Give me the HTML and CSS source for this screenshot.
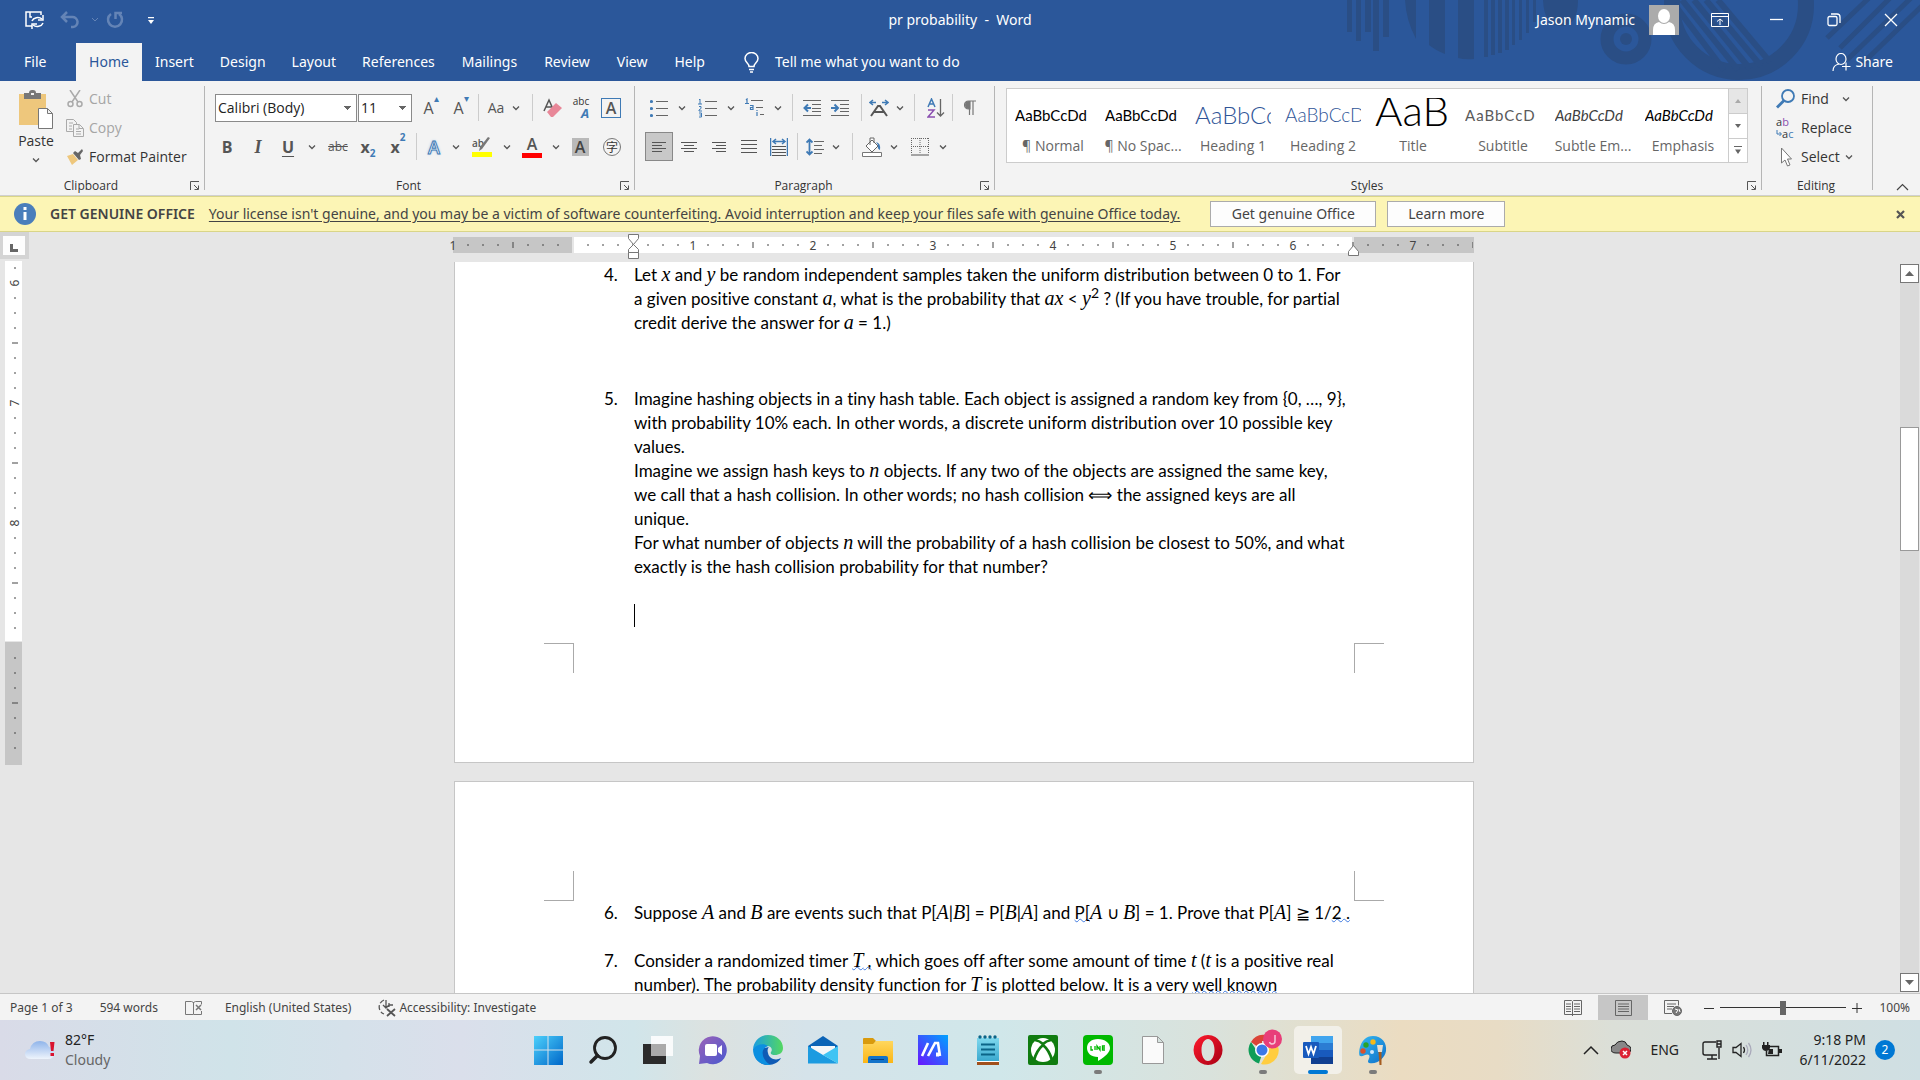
FILE: index.html
```html
<!DOCTYPE html>
<html lang="en">
<head>
<meta charset="utf-8">
<title>pr probability - Word</title>
<link rel="stylesheet" href="styles.css">
</head>
<body>
<svg class="defs" aria-hidden="true">
  <defs>
    <symbol id="chev" viewBox="0 0 8 6"><path d="M1 1.500l3 3 3-3" fill="none" stroke="#555" stroke-width="1.300"/></symbol>
    <symbol id="launch" viewBox="0 0 10 10"><path d="M.5 9V.5H9M4 4l4 4M8.500 4.500v4h-4" fill="none" stroke="#555"/></symbol>
    <pattern id="ticks" width="120" height="16" patternUnits="userSpaceOnUse">
      <path d="M15 7v2M30 7v2M45 7v2M60 5v6M75 7v2M90 7v2M105 7v2" stroke="#444" fill="none"/>
    </pattern>
    <pattern id="vticks" y="22" width="17" height="120" patternUnits="userSpaceOnUse">
      <path d="M9 15h2M9 30h2M9 45h2M7 60h6M9 75h2M9 90h2M9 105h2" stroke="#444" fill="none"/>
    </pattern>
    <linearGradient id="gWin" x2="1" y2="1"><stop stop-color="#4cd0fb"/><stop offset="1" stop-color="#0067c9"/></linearGradient>
    <linearGradient id="gCloud" y2="1" x2="0"><stop stop-color="#8fb4ea"/><stop offset="1" stop-color="#eef4fc"/></linearGradient>
    <linearGradient id="gChat" y2="1" x2="1"><stop stop-color="#9b62b8"/><stop offset="1" stop-color="#4a58cf"/></linearGradient>
    <linearGradient id="gEdge" x2="1" y2="0"><stop stop-color="#1b9de2"/><stop offset="1" stop-color="#54d860"/></linearGradient>
    <linearGradient id="gAsus" x2="1" y1="1" y2="0"><stop stop-color="#6a14ff"/><stop offset="1" stop-color="#00a2ff"/></linearGradient>
    <linearGradient id="gOpera" x2="1" y2="1"><stop stop-color="#ff1b2d"/><stop offset="1" stop-color="#a70014"/></linearGradient>
    <linearGradient id="gFold" x2="0" y2="1"><stop stop-color="#ffd75e"/><stop offset="1" stop-color="#fbb616"/></linearGradient>
    <linearGradient id="gNote" x2="0" y2="1"><stop stop-color="#7fd8ee"/><stop offset="1" stop-color="#3aa9cf"/></linearGradient>
    <linearGradient id="gPaint" x2="1" y2="1"><stop stop-color="#34b8f1"/><stop offset="1" stop-color="#0f6fc9"/></linearGradient>
  </defs>
</svg>

<header class="top">
  <svg class="art" viewBox="0 0 580 81" aria-hidden="true">
    <g fill="#2a4e85">
      <path d="M7 0h5v32H7zM16 0h5v41h-5zM25 0h6v32h-6zM33 0h6v51h-6zM43 0h6v37h-6zM65 0h11v39Q66 20 65 0zM89 0h16v54q-10-4-16-9zM118 0h16v59q-9 1-16-1zM144 0h4v57h-4zM151 0h4v55h-4zM158 0h4v53h-4zM165 0h4v50h-4zM172 0h3v45h-3zM179 0h3v40h-3zM186 0h3v33h-3zM193 0h3v22h-3zM203 0h35q0 26-17 26T203 0z"/>
    </g>
    <g fill="none" stroke="#2a4e85">
      <circle cx="286" cy="39" r="19" stroke-width="13"/>
      <circle cx="399" cy="5" r="67" stroke-width="16"/>
      <path d="M334 4l50 66M342 0l56 70M354 0l56 69M366 0l55 66M378 0l52 62" stroke-width="6"/>
      <path d="M487 38l44-42M500 48l52-52M507 60l66-64M522 64l64-62" stroke-width="5"/>
    </g>
    <circle cx="286" cy="39" r="6" fill="#2a4e85"/>
  </svg>
  <div class="titlebar">
    <div class="qat">
      <button aria-label="Save"><svg width="20" height="20" viewBox="0 0 20 20" fill="none" stroke="#fff" stroke-width="1.500"><path d="M7 16H1V2h15v3M5 2v5h2M7 11a6 5 0 0 1 10-2M18 13a6 5 0 0 1-10 2"/><path d="M18 5v5h-5M7 19v-5h5"/></svg></button>
      <button aria-label="Undo"><svg width="20" height="18" viewBox="0 0 20 18" fill="none" stroke="#6484b6" stroke-width="2.500"><path d="M7 1L2 6l5 5M3 6h9a4.500 4.500 0 0 1 1 10h-2"/></svg></button>
      <button aria-label="Undo list"><svg width="8" height="6" viewBox="0 0 8 6"><path d="M1 1l3 3 3-3" fill="none" stroke="#6484b6"/></svg></button>
      <button class="redo" aria-label="Redo"><svg width="18" height="18" viewBox="0 0 18 18" fill="none" stroke="#6484b6" stroke-width="2.500"><path d="M5 3a7 7 0 1 0 8 0M9.500 8V2H16"/></svg></button>
      <button aria-label="Customize toolbar"><svg width="8" height="8" viewBox="0 0 8 8"><path d="M1 1h6v1.300H1zM1 4h6L4 8z" fill="#fff"/></svg></button>
    </div>
    <h1 class="title">pr probability &nbsp;-&nbsp; Word</h1>
    <div class="winctl">
      <span class="user">Jason Mynamic</span>
      <svg class="avatar" width="30" height="30" viewBox="0 0 30 30"><path fill="#ababab" d="M0 0h30v30H0z"/><g fill="#fff"><ellipse cx="15" cy="11" rx="6" ry="7"/><path d="M4 30V25q0-7 6-8 5 4 10 0 6 1 6 8v5z"/></g></svg>
      <button aria-label="Ribbon options"><svg width="18" height="14" viewBox="0 0 18 14" fill="none" stroke="#fff"><path d="M.5.5h17v13H.5zM.5 3.500h17M9 12V6M6 8.500L9 6l3 2.500"/></svg></button>
      <button aria-label="Minimize"><svg width="14" height="14" viewBox="0 0 14 14"><path d="M0 6.500h13" stroke="#fff" stroke-width="1.300"/></svg></button>
      <button aria-label="Restore"><svg width="14" height="14" viewBox="0 0 14 14" fill="none" stroke="#fff" stroke-width="1.300"><rect x="1" y="3.500" width="9" height="9" rx="1.500"/><path d="M4 1h6q3 0 3 3v6"/></svg></button>
      <button aria-label="Close"><svg width="14" height="14" viewBox="0 0 14 14"><path d="M1 1l12 12M13 1L1 13" stroke="#fff" stroke-width="1.300"/></svg></button>
    </div>
  </div>
  <nav class="tabs">
    <a class="file" href="#">File</a><a class="on" href="#">Home</a><a href="#">Insert</a><a href="#">Design</a><a href="#">Layout</a><a href="#">References</a><a href="#">Mailings</a><a href="#">Review</a><a href="#">View</a><a href="#">Help</a>
    <a class="tell" href="#"><svg width="15" height="21" viewBox="0 0 15 21" fill="none" stroke="#fff" stroke-width="1.500"><path d="M5 14.500c0-3-4-4-4-8a6.500 6 0 0 1 13 0c0 4-4 5-4 8zM5 17.500h5M6 20h3"/></svg>Tell me what you want to do</a>
    <button class="share"><svg width="20" height="19" viewBox="0 0 20 19" fill="none" stroke="#fff" stroke-width="1.200"><ellipse cx="9" cy="6" rx="5" ry="5.500"/><path d="M1 18q0-6 6-7M14 9.500v8M10 13.500h8.500"/></svg>Share</button>
  </nav>
</header>

<section class="ribbon">
  <div class="group clip">
    <div class="clipbody">
      <button class="paste"><svg width="34" height="40" viewBox="0 0 34 40"><path fill="#eec77c" d="M0 4h27v31H0z"/><path fill="#777" d="M5 3h5q0-3 3-3h1q3 0 3 3h5v6H5z"/><path fill="#f3f3f3" d="M12 3h3v2h-3z"/><path d="M19.500 18.500h9l5 5v15h-14zM28.500 18.500v5h5" fill="#fff" stroke="#777"/></svg>Paste<svg width="8" height="6"><use href="#chev"/></svg></button>
      <div class="stack">
        <button class="off"><svg width="16" height="18" viewBox="0 0 16 18" fill="none" stroke="#aaa" stroke-width="1.500"><path d="M3 0l8 12M13 0L5 12"/><circle cx="3.500" cy="14" r="2.500"/><circle cx="12.500" cy="14" r="2.500"/></svg>Cut</button>
        <button class="off"><svg width="18" height="18" viewBox="0 0 18 18" fill="none" stroke="#aaa"><path d="M7 12.500H.5V.5h7l3 3V5M3 4h4M3 7h3M3 10h3M7.500 5.500h6l4 4v8h-10zM13 5.500v4h4M10 10h3M10 12.500h5M10 15h5"/></svg>Copy</button>
        <button><svg width="18" height="16" viewBox="0 0 18 16"><path fill="#eec77c" d="M1 7l6-2 5 6-6 5z"/><path fill="#666" d="M7 4l2-2 3 2 4-4 1 2-3 4 1 4-2 1z"/></svg>Format Painter</button>
      </div>
    </div>
    <div class="glabel"><span>Clipboard</span><button aria-label="Clipboard dialog"><svg width="10" height="10"><use href="#launch"/></svg></button></div>
  </div>

  <div class="group font">
    <div class="row f1">
      <select class="combo" aria-label="Font"><option>Calibri (Body)</option></select>
      <select class="combo" aria-label="Font size"><option>11</option></select>
      <button aria-label="Grow font" class="ltr">A<sup>▴</sup></button>
      <button aria-label="Shrink font" class="ltr">A<sup>▾</sup></button>
      <i class="sep"></i>
      <button class="ltr">Aa</button>
      <button aria-label="Case"><svg width="8" height="6"><use href="#chev"/></svg></button>
      <i class="sep"></i>
      <button aria-label="Clear formatting"><svg width="20" height="20" viewBox="0 0 20 20"><path d="M1 13L6 2l4 9M3 9h6" fill="none" stroke="#555" stroke-width="1.500"/><path fill="#e88798" d="M4 14l9-9 6 5-9 9H8z"/></svg></button>
      <button class="pho" aria-label="Phonetic guide"><span>abc</span><b>A</b></button>
      <button class="boxed" aria-label="Character border">A</button>
    </div>
    <div class="row f2">
      <button class="ltr bold">B</button>
      <button class="ltr ital">I</button>
      <button class="ltr und">U</button>
      <button aria-label="Underline style"><svg width="8" height="6"><use href="#chev"/></svg></button>
      <button class="strike">abc</button>
      <button class="ltr bold">x<sub>2</sub></button>
      <button class="ltr bold">x<sup>2</sup></button>
      <i class="sep"></i>
      <button class="glow">A</button>
      <button aria-label="Text effects"><svg width="8" height="6"><use href="#chev"/></svg></button>
      <button class="hl" aria-label="Highlight"><svg width="20" height="20" viewBox="0 0 20 20"><text x="0" y="10" class="hltext">ab</text><path d="M18 1l-8 11-3 2 1-4 8-10z" fill="#777"/><path fill="#ff0" d="M0 15h20v5H0z"/></svg></button>
      <button aria-label="Highlight color"><svg width="8" height="6"><use href="#chev"/></svg></button>
      <button class="fcolor">A</button>
      <button aria-label="Font color"><svg width="8" height="6"><use href="#chev"/></svg></button>
      <button class="shade">A</button>
      <button class="circ">字</button>
    </div>
    <div class="glabel"><span>Font</span><button aria-label="Font dialog"><svg width="10" height="10"><use href="#launch"/></svg></button></div>
  </div>

  <div class="group para">
    <div class="row p1">
      <button aria-label="Bullets"><svg width="18" height="18" viewBox="0 0 18 18"><path d="M6 2.500h12M6 9.500h12M6 16.500h12" stroke="#666" stroke-width="1.200"/><g fill="#3f7ab5"><circle cx="1.500" cy="2.500" r="1.600"/><circle cx="1.500" cy="9.500" r="1.600"/><circle cx="1.500" cy="16.500" r="1.600"/></g></svg></button>
      <button aria-label="Bullet library"><svg width="8" height="6"><use href="#chev"/></svg></button>
      <button aria-label="Numbering"><svg width="20" height="20" viewBox="0 0 20 20"><path d="M7 3.500h12M7 10.500h12M7 17.500h12" stroke="#666" stroke-width="1.200"/><path d="M1 2l1-1v5M0 6h4M1 8.500h2v2L1 12v1h3M1 15h2.500v4H1M1.500 17h2" fill="none" stroke="#3f7ab5"/></svg></button>
      <button aria-label="Number library"><svg width="8" height="6"><use href="#chev"/></svg></button>
      <button aria-label="Multilevel list"><svg width="20" height="20" viewBox="0 0 20 20"><path d="M6 2.500h12M11 9.500h7M15 16.500h4" stroke="#666" stroke-width="1.200"/><path d="M1 2l1-1v4M0 5.500h4M5 7.500h3v4H5.500v-2H8M12 14v4M12 12v1" fill="none" stroke="#3f7ab5" stroke-width="1.200"/></svg></button>
      <button aria-label="List styles"><svg width="8" height="6"><use href="#chev"/></svg></button>
      <i class="sep"></i>
      <button aria-label="Decrease indent"><svg width="18" height="18" viewBox="0 0 18 18" fill="none"><path d="M0 1.500h18M9 5.500h9M9 9.500h9M9 12.500h9M0 16.500h18" stroke="#666" stroke-width="1.200"/><path d="M8 9H2M5 5.500L1.500 9 5 12.500" stroke="#3f7ab5" stroke-width="2"/></svg></button>
      <button aria-label="Increase indent"><svg width="18" height="18" viewBox="0 0 18 18" fill="none"><path d="M0 1.500h18M9 5.500h9M9 9.500h9M9 12.500h9M0 16.500h18" stroke="#666" stroke-width="1.200"/><path d="M0 9h6M3.500 5.500L7 9l-3.500 3.500" stroke="#3f7ab5" stroke-width="2"/></svg></button>
      <i class="sep"></i>
      <button aria-label="Asian layout"><svg width="20" height="18" viewBox="0 0 20 18" fill="none"><path d="M2 17L9 7h2l7 10M5 13h10" stroke="#555" stroke-width="2"/><path d="M1 3.500h6M4 1L1 3.500 4 6M19 3.500h-6M16 1l3 2.500L16 6" stroke="#3f7ab5" stroke-width="1.500"/></svg></button>
      <button aria-label="Asian options"><svg width="8" height="6"><use href="#chev"/></svg></button>
      <i class="sep"></i>
      <button aria-label="Sort"><svg width="18" height="20" viewBox="0 0 18 20" fill="none"><path d="M1 9l3.500-8L8 9M2 6h5" stroke="#3f7ab5" stroke-width="1.500"/><path d="M1 12h6l-6 7h7" stroke="#8a4fb0" stroke-width="1.500"/><path d="M13.500 1v17M10 14.500l3.500 3.500 3.500-3.500" stroke="#666" stroke-width="1.300"/></svg></button>
      <i class="sep"></i>
      <button aria-label="Show marks"><svg width="12" height="16" viewBox="0 0 12 16"><path d="M12 1H4.500a4 4 0 0 0 0 8H6V1M5.500 1v14M9 1v14" fill="none" stroke="#777" stroke-width="1.200"/><path d="M5 1a4 4 0 0 0 0 8z" fill="#777"/></svg></button>
    </div>
    <div class="row p2">
      <button class="pressed" aria-label="Align left"><svg width="16" height="12" viewBox="0 0 16 12"><path d="M1 1.500h14M1 4.500h10M1 7.500h14M1 10.500h10" stroke="#555"/></svg></button>
      <button aria-label="Center"><svg width="16" height="12" viewBox="0 0 16 12"><path d="M0 1.500h16M3 4.500h10M0 7.500h16M3 10.500h10" stroke="#555"/></svg></button>
      <button aria-label="Align right"><svg width="16" height="12" viewBox="0 0 16 12"><path d="M1 1.500h14M5 4.500h10M1 7.500h14M5 10.500h10" stroke="#555"/></svg></button>
      <button aria-label="Justify"><svg width="16" height="14" viewBox="0 0 16 14"><path d="M0 .5h16M0 4.500h16M0 8.500h16M0 12.500h16" stroke="#555"/></svg></button>
      <button aria-label="Distribute"><svg width="18" height="18" viewBox="0 0 18 18" fill="none"><path d="M.5 0v18M17.500 0v18M3 3.500h12M6 1L3 3.500 6 6M12 1l3 2.500L12 6" stroke="#3f7ab5" stroke-width="1.500"/><path d="M2 8.500h14M2 11.500h14M2 14.500h14M2 17.500h14" stroke="#555"/></svg></button>
      <i class="sep"></i>
      <button aria-label="Line spacing"><svg width="18" height="18" viewBox="0 0 18 18" fill="none"><path d="M3.500 1v16M.5 4.500l3-3 3 3M.5 13.500l3 3 3-3" stroke="#3f7ab5" stroke-width="1.800"/><path d="M8 3.500h10M8 7.500h8M8 11.500h10M8 15.500h8" stroke="#666"/></svg></button>
      <button aria-label="Line spacing options"><svg width="8" height="6"><use href="#chev"/></svg></button>
      <i class="sep"></i>
      <button aria-label="Shading"><svg width="20" height="20" viewBox="0 0 20 20"><path d="M4 9l6-6 6 6-6 6zM8 8V1h4v5" fill="#fff" stroke="#666"/><path d="M14 5q5 1 4 8-3-1-2-5z" fill="#3f7ab5"/><path d="M.5 15.500h19v4H.5z" fill="#fff" stroke="#777"/></svg></button>
      <button aria-label="Shading color"><svg width="8" height="6"><use href="#chev"/></svg></button>
      <button aria-label="Borders"><svg width="18" height="18" viewBox="0 0 18 18"><path d="M.5 0v16M17.500 0v16M9 0v16M0 .5h18M0 8.500h18" stroke="#666" stroke-dasharray="1 1"/><path d="M0 17h18" stroke="#555"/></svg></button>
      <button aria-label="Border options"><svg width="8" height="6"><use href="#chev"/></svg></button>
    </div>
    <div class="glabel"><span>Paragraph</span><button aria-label="Paragraph dialog"><svg width="10" height="10"><use href="#launch"/></svg></button></div>
  </div>

  <div class="group styles">
    <div class="gallery">
      <button class="st"><span class="pv">AaBbCcDd</span>¶ Normal</button>
      <button class="st"><span class="pv">AaBbCcDd</span>¶ No Spac...</button>
      <button class="st"><span class="pv h1">AaBbCc</span>Heading 1</button>
      <button class="st"><span class="pv h2">AaBbCcD</span>Heading 2</button>
      <button class="st"><span class="pv tt">AaB</span>Title</button>
      <button class="st"><span class="pv sub">AaBbCcD</span>Subtitle</button>
      <button class="st"><span class="pv sem">AaBbCcDd</span>Subtle Em...</button>
      <button class="st"><span class="pv em">AaBbCcDd</span>Emphasis</button>
      <div class="gnav">
        <button class="dis" aria-label="Previous styles"><svg width="6" height="4"><path d="M0 4l3-4 3 4z" fill="#aaa"/></svg></button>
        <button aria-label="Next styles"><svg width="6" height="4"><path d="M0 0l3 4 3-4z" fill="#666"/></svg></button>
        <button aria-label="More styles"><svg width="8" height="8"><path d="M0 0h8v1H0zM1 3.500h6L4 8z" fill="#666"/></svg></button>
      </div>
    </div>
    <div class="glabel"><span>Styles</span><button aria-label="Styles dialog"><svg width="10" height="10"><use href="#launch"/></svg></button></div>
  </div>

  <div class="group edit">
    <div class="stack">
      <button><svg width="20" height="20" viewBox="0 0 20 20" fill="none" stroke="#3f7ab5"><circle cx="12" cy="7" r="6" stroke-width="1.800"/><path d="M8 11.500l-7 7" stroke-width="2.800"/></svg>Find<svg class="fc" width="8" height="6"><use href="#chev"/></svg></button>
      <button><span class="abac"><span>a<b>b</b></span><span><svg width="6" height="7" viewBox="0 0 6 7"><path d="M1 0v4h4M3.500 2L5.500 4l-2 2" fill="none" stroke="#3f7ab5"/></svg>a<em>c</em></span></span>Replace</button>
      <button><svg width="20" height="20" viewBox="0 0 20 20"><path d="M5.500 1v15l3.500-3 2.500 6 2.500-1-2.500-6h4z" fill="#fff" stroke="#777"/></svg>Select<svg width="8" height="6"><use href="#chev"/></svg></button>
    </div>
    <div class="glabel"><span>Editing</span></div>
  </div>
  <button class="collapse" aria-label="Collapse ribbon"><svg width="13" height="8" viewBox="0 0 13 8"><path d="M1 7l5.500-5.500L12 7" fill="none" stroke="#444" stroke-width="1.200"/></svg></button>
</section>

<aside class="notice">
  <svg width="22" height="22" viewBox="0 0 22 22"><circle cx="11" cy="11" r="11" fill="#4a7ebb"/><path d="M9.500 9h3v8h-3zM9.500 4h3v3h-3z" fill="#fff"/></svg>
  <strong>GET GENUINE OFFICE</strong>
  <a href="#">Your license isn't genuine, and you may be a victim of software counterfeiting. Avoid interruption and keep your files safe with genuine Office today.</a>
  <button class="nb wide">Get genuine Office</button>
  <button class="nb">Learn more</button>
  <button class="nx" aria-label="Dismiss"><svg width="9" height="9" viewBox="0 0 9 9"><path d="M1 1l7 7M8 1L1 8" stroke="#555" stroke-width="2.200"/></svg></button>
</aside>

<main class="work">
  <div class="vside">
    <div class="corner"><svg width="8" height="8"><path d="M0 0h3v5h5v3H0z" fill="#666"/></svg></div>
    <svg class="vruler" width="17" height="504" viewBox="0 0 17 504">
      <path fill="#fff" d="M0 0h17v380H0z"/><path fill="#c6c6c6" d="M0 381h17v123H0z"/>
      <path fill="url(#vticks)" d="M0 0h17v496H0z"/>
      <g class="rnum"><text transform="translate(14 22) rotate(-90)">6</text><text transform="translate(14 142) rotate(-90)">7</text><text transform="translate(14 262) rotate(-90)">8</text></g>
    </svg>
  </div>
  <div class="canvas">
    <svg class="hruler" width="1020" height="26" viewBox="1 0 1020 26">
      <path fill="#c6c6c6" d="M0 4h119v16H0zM901 4h120v16H901z"/><path fill="#fff" d="M121 4h778v16H121z"/>
      <path fill="url(#ticks)" transform="translate(0 4)" d="M0 0h1020v16H0z"/>
      <g class="rnum"><text x="0" y="17">1</text><text x="240" y="17">1</text><text x="360" y="17">2</text><text x="480" y="17">3</text><text x="600" y="17">4</text><text x="720" y="17">5</text><text x="840" y="17">6</text><text x="960" y="17">7</text></g>
      <g fill="#fff" stroke="#777"><path d="M175.500 1.500h10v4l-5 6-5-6zM175.500 19.500v-3l5-5 5 5v3zM175.500 19.500h10v6h-10zM895.500 22.500v-4l5-6 5 6v4z"/></g>
    </svg>
    <div class="pages">
      <article class="page first">
        <div class="item q4"><span>4.</span><p>Let <i>x</i> and <i>y</i> be random independent samples taken the uniform distribution between 0 to 1. For<br>a given positive constant <i>a</i>, what is the probability that <i>ax</i> &lt; <i>y</i><sup>2</sup> ? (If you have trouble, for partial<br>credit derive the answer for <i>a</i> = 1.)</p></div>
        <div class="item"><span>5.</span><p>Imagine hashing objects in a tiny hash table. Each object is assigned a random key from {0, …, 9},<br>with probability 10% each. In other words, a discrete uniform distribution over 10 possible key<br>values.<br>Imagine we assign hash keys to <i>n</i> objects. If any two of the objects are assigned the same key,<br>we call that a hash collision. In other words; no hash collision ⟺ the assigned keys are all<br>unique.<br>For what number of objects <i>n</i> will the probability of a hash collision be closest to 50%, and what<br>exactly is the hash collision probability for that number?</p></div>
        <div class="caret"></div>
        <div class="marks bottom"><i></i><i></i></div>
      </article>
      <article class="page second">
        <div class="marks upper"><i></i><i></i></div>
        <div class="item q6"><span>6.</span><p>Suppose <i>A</i> and <i>B</i> are events such that P[<i>A</i>|<i>B</i>] = P[<i>B</i>|<i>A</i>] and <u>P[</u><i>A</i> ∪ <i>B</i>] = 1. Prove that P[<i>A</i>] ≧ 1/<u>2 .</u></p></div>
        <div class="item"><span>7.</span><p>Consider a randomized timer <u><i>T</i> ,</u> which goes off after some amount of time <i>t</i> (<i>t</i> is a positive real<br>number). The probability density function for <i>T</i> is plotted below. It is a very <u>well known</u></p></div>
      </article>
    </div>
  </div>
  <div class="scroll">
    <button aria-label="Scroll up"><svg width="9" height="5"><path d="M0 5l4.500-5L9 5z" fill="#666"/></svg></button>
    <div class="track"><div class="thumb"></div></div>
    <button aria-label="Scroll down"><svg width="9" height="5"><path d="M0 0l4.500 5L9 0z" fill="#666"/></svg></button>
  </div>
</main>

<footer class="status">
  <span class="s1">Page 1 of 3</span><span class="s2">594 words</span>
  <svg class="s3" width="18" height="16" viewBox="0 0 18 16" fill="none" stroke="#777"><path d="M8.500 14.500H.5v-13h6l2 1 2-1h6v3M8.500 2v12M16.500 11v3.500h-8"/><path d="M11 5l5 5M16 5l-5 5" stroke-width="1.500"/></svg>
  <span class="s4">English (United States)</span>
  <svg class="s5" width="19" height="18" viewBox="0 0 19 18" fill="none" stroke="#555" stroke-width="1.300"><path d="M7 1a7.500 7.500 0 0 0 0 14" stroke-dasharray="5 2"/><path d="M9 1v8M6 6l3 3 3-3M12 6h4M12 4l0 4"/><path d="M10 10l8 7M18 10l-8 7" stroke-width="1.800"/></svg>
  <span>Accessibility: Investigate</span>
  <div class="views">
    <button aria-label="Read mode"><svg width="18" height="16" viewBox="0 0 18 16" fill="none" stroke="#666"><path d="M8.500 14.500H.5V.5h7l1 1 1-1h8v14H8.500zM8.500 2v14M2 4h5M2 6.500h5M2 9h5M2 11.500h5M10 4h6M10 6.500h6M10 9h6M10 11.500h6"/></svg></button>
    <button class="sel" aria-label="Print layout"><svg width="17" height="16" viewBox="0 0 17 16" fill="none" stroke="#666"><path d="M.5.5h16v15H.5zM3 4h11M3 6.500h11M3 9h11M3 11.500h11"/></svg></button>
    <button aria-label="Web layout"><svg width="18" height="16" viewBox="0 0 18 16" fill="none" stroke="#666"><path d="M8 13.500H.5V.5h14v5M3 4h9M3 6.500h7M3 9h5"/><circle cx="13" cy="11" r="4.500" fill="#777"/><path d="M11 9l3 1-2 3M15 9l1 3" stroke="#fff"/></svg></button>
  </div>
  <button class="zb" aria-label="Zoom out"><svg width="10" height="10"><path d="M0 5.500h10" stroke="#333"/></svg></button>
  <input type="range" min="0" max="100" value="50" aria-label="Zoom">
  <button class="zb" aria-label="Zoom in"><svg width="10" height="10"><path d="M0 5.500h10M5 0v10" stroke="#333"/></svg></button>
  <span class="pct">100%</span>
</footer>

<nav class="taskbar">
  <div class="weather"><svg width="32" height="22" viewBox="0 0 32 22"><path d="M6 20q-6 0-6-5 0-4 5-5 2-8 10-8 7 0 9 6 5 1 5 6 0 6-6 6z" fill="url(#gCloud)"/><path d="M25 3h4.500l-1 9h-2.500zM25.500 14h3.500v3h-3.500z" fill="#d9132f"/></svg><div><span>82°F</span><span class="dim">Cloudy</span></div></div>
  <div class="apps">
    <button aria-label="Start"><svg width="30" height="30" viewBox="0 0 30 30"><path fill="url(#gWin)" d="M1 1h13.500v13.500H1zM15.500 1H30v13.500H15.500zM1 15.500h13.500V30H1zM15.500 15.500H30V30H15.500z"/></svg></button>
    <button aria-label="Search"><svg width="30" height="30" viewBox="0 0 30 30" fill="none" stroke="#222"><circle cx="17" cy="13" r="10.500" stroke-width="2.800"/><path d="M9.500 20.500L3 27" stroke-width="3.500" stroke-linecap="round"/></svg></button>
    <button aria-label="Task view"><svg width="30" height="30" viewBox="0 0 30 30"><path fill="#2b2b2b" d="M0 9h23v20H0z"/><path fill="#fff" fill-opacity=".85" d="M8 1h22v20H8z"/><path fill="#aaa" d="M8 9h15v12H8z"/></svg></button>
    <button aria-label="Chat"><svg width="30" height="30" viewBox="0 0 30 30"><path fill="url(#gChat)" d="M1 29l1-8A14 14 0 1 1 9 28z"/><rect x="7" y="9" width="12" height="12" rx="2" fill="#fff"/><path fill="#fff" d="M20 13l4-3v10l-4-3z"/></svg></button>
    <button aria-label="Edge"><svg width="30" height="30" viewBox="0 0 30 30"><path fill="#0f5bb5" d="M1 15c0 9 6 15 14 15 6 0 11-3 13-7-5 3-12 1-13-5-1-3 0-5 1-6z"/><path fill="url(#gEdge)" d="M0 14C1 5 8 0 15 0c9 0 15 6 15 13 0 5-4 7-8 7-3 0-5-1-4-3 2-3 0-6-4-6-6-1-11 1-14 3z"/><path fill="#0c8fe0" d="M0 14c4-5 11-6 15-3-6 2-7 8-3 14 2 3 4 4 6 5C7 31 0 24 0 14z"/></svg></button>
    <button aria-label="Mail"><svg width="30" height="30" viewBox="0 0 30 30"><path fill="#0a63b6" d="M0 11L15 1l15 10v4H0z"/><path fill="#f4f6f8" d="M3 11h24v10H3z"/><path fill="#1c9be0" d="M0 11l15 9L30 28.500H0z"/><path fill="#3fc4f4" d="M30 11v17.500L15 20z"/></svg></button>
    <button aria-label="File Explorer"><svg width="30" height="30" viewBox="0 0 30 30"><path fill="#d99a0d" d="M0 4q0-1 1-1h9l3 3-3 4H0z"/><path fill="url(#gFold)" d="M0 9h10l3-3h17v22H0z"/><path fill="#1373c9" d="M5 28v-5q0-2 2-2h16q2 0 2 2v5z"/><path stroke="#073f80" d="M8 24.500h13"/></svg></button>
    <button aria-label="MyASUS"><svg width="30" height="30" viewBox="0 0 30 30"><path fill="url(#gAsus)" d="M0 0h30v30H0z"/><path d="M4 21l6-13M10 21l7-13h3l2 13" fill="none" stroke="#fff" stroke-width="2.600"/><path d="M18 21.500v-4h3v4z" fill="#fff"/></svg></button>
    <button aria-label="Notepad"><svg width="30" height="30" viewBox="0 0 30 30"><path fill="url(#gNote)" d="M4 3h22v23H4z"/><path fill="#fff" d="M4 26h22v1H4z"/><path fill="#a0501c" d="M4 27h22v3H4z"/><path d="M8 9.500h14M8 14.500h14M8 19.500h14" stroke="#0b6488" stroke-width="1.800"/><g fill="#0b6488"><circle cx="7" cy="2" r="1.700"/><circle cx="12" cy="2" r="1.700"/><circle cx="17" cy="2" r="1.700"/><circle cx="22" cy="2" r="1.700"/></g></svg></button>
    <button aria-label="Xbox"><svg width="30" height="30" viewBox="0 0 30 30"><rect width="30" height="30" rx="2" fill="#107c10"/><circle cx="15" cy="15" r="12" fill="#fff"/><path d="M6 25Q9 15 15 10q6 5 9 15M7 5q5 1 8 4 3-3 8-4" fill="none" stroke="#107c10" stroke-width="2.800"/></svg></button>
    <button class="run" aria-label="LINE"><svg width="30" height="30" viewBox="0 0 30 30"><rect width="30" height="30" rx="4" fill="#00b900"/><path fill="#fff" d="M15 4c7 0 12 4 12 9 0 4-4 8-12 13v-4C8 22 4 18 4 13s4-9 11-9z"/><path d="M8 11v4h2M12 11v4M14 15v-4l3 4v-4M22 11h-2.500v4H22M20 13h2" fill="none" stroke="#00b900" stroke-width="1.300"/></svg></button>
    <button aria-label="Document"><svg width="22" height="30" viewBox="0 0 22 30"><path d="M.5 1.500h15l6 6v21H.5zM15.500 1.500v6h6" fill="#fafafa" stroke="#999"/></svg></button>
    <button aria-label="Opera"><svg width="30" height="30" viewBox="0 0 30 30"><path fill="url(#gOpera)" fill-rule="evenodd" d="M15 0a14.500 15 0 1 0 .1 0zM15 4c4 0 6.500 5 6.500 11S19 26 15 26 8.500 21 8.500 15 11 4 15 4z"/></svg></button>
    <button class="run chrome" aria-label="Chrome"><svg width="34" height="36" viewBox="0 0 34 36"><path fill="#db4437" d="M14 21L3 13a14 14 0 0 1 24-1H14z"/><path fill="#0f9d58" d="M3 13l8 12 3 0-3 9.500A14 14 0 0 1 3 13z"/><path fill="#ffcd40" d="M27 12a14 14 0 0 1-14 23l7-12V13z"/><circle cx="14" cy="21" r="7" fill="#fff"/><circle cx="14" cy="21" r="5.500" fill="#3b78e7"/><circle cx="24.500" cy="10" r="9.500" fill="#e83e79"/><path d="M27 6v6q0 3-3 3-2 0-2.500-2" fill="none" stroke="#f6c5d7" stroke-width="1.500"/></svg></button>
    <button class="active" aria-label="Word"><svg width="30" height="30" viewBox="0 0 30 30"><path fill="#41a5ee" d="M8 1h22v7H8z"/><path fill="#2b7cd3" d="M8 8h22v7H8z"/><path fill="#185abd" d="M8 15h22v7H8z"/><path fill="#103f91" d="M8 22h22v7H8z"/><rect y="7" width="16" height="16" rx="1" fill="#185abd"/><path d="M3 11l2.500 8L8 12l2.500 7L13 11" fill="none" stroke="#fff" stroke-width="1.800"/></svg></button>
    <button class="run" aria-label="Paint"><svg width="30" height="30" viewBox="0 0 30 30"><path fill="url(#gPaint)" d="M15 1c9 0 14 7 13 15-1 7-9 14-17 12-3-2 2-5 0-8-2-2-6 2-9 1C0 20 1 1 15 1z"/><circle cx="5" cy="16" r="2.700" fill="#d8522e"/><circle cx="8" cy="10" r="2.700" fill="#29a329"/><circle cx="15" cy="7" r="2.700" fill="#f6b919"/><circle cx="14" cy="17" r="2" fill="#cfe6fa"/><path fill="#e8dfd2" d="M19 10h6l-1 7h-4z"/><path fill="#a55c20" d="M20.500 17h3v13h-2z"/></svg></button>
  </div>
  <div class="tray">
    <svg width="16" height="10" viewBox="0 0 16 10"><path d="M1 9l7-7 7 7" fill="none" stroke="#222" stroke-width="1.500"/></svg>
    <svg width="20" height="20" viewBox="0 0 20 20"><path d="M5 13q-5 0-5-4 0-4 4-4 2-4 7-4 4 0 5 4 4 1 4 4 0 4-4 4z" fill="#888" stroke="#222"/><circle cx="14" cy="13" r="5.500" fill="#dc2233"/><path d="M12 11l4 4M16 11l-4 4" stroke="#fff" stroke-width="1.500"/></svg>
    <span class="eng">ENG</span>
    <svg class="mon" width="20" height="20" viewBox="0 0 20 20" fill="none" stroke="#222" stroke-width="1.400"><path d="M14 2H3Q1 2 1 4v9q0 2 2 2h12M5 19h10M10 15v4M17 8v11M15 1h4v6h-4zM15 4h4"/></svg>
    <svg class="spk" width="20" height="16" viewBox="0 0 20 16" fill="none" stroke="#222" stroke-width="1.300"><path d="M1 5.500h3l5-4v13l-5-4H1z"/><path d="M11.500 5q2 3 0 6"/><path d="M14 3q3.500 5 0 10M16.500 1q5 7 0 14" stroke="#aab"/></svg>
    <svg class="bat" width="20" height="16" viewBox="0 0 20 16"><path d="M8 4.500h8.500v9H4.500V9" fill="none" stroke="#222" stroke-width="1.500"/><path d="M0 3h8v3q-1 3-4 3T0 6zM1 0h1.500v3H1zM5 0h1.500v3H5zM7 7h4v5H6zM17 7h3v4h-3z" fill="#222"/></svg>
    <div class="clock"><span>9:18 PM</span><span>6/11/2022</span></div>
    <span class="badge">2</span>
  </div>
</nav>
</body>
</html>
```
FILE: styles.css
```css
* { box-sizing: border-box; }
body {
  margin: 0;
  height: 100vh;
  display: grid;
  grid-template-rows: auto auto auto minmax(0, 1fr) auto auto;
  grid-template-columns: minmax(0, 1fr);
  font: 14px/20px "Noto Sans", "Open Sans", sans-serif;
  color: #333;
  overflow: hidden;
}
button {
  font: inherit;
  color: inherit;
  background: none;
  border: 0;
  padding: 0;
  display: flex;
  align-items: center;
  justify-content: center;
}
a { color: inherit; text-decoration: none; }
svg { flex: none; display: block; }
.defs { position: absolute; width: 0; height: 0; }

/* Title bar and tabs */
.top { position: relative; background: #2b579a; color: #fff; }
.art { position: absolute; right: 0; top: 0; width: 580px; height: 81px; }
.titlebar { position: relative; display: grid; grid-template-columns: 1fr auto 1fr; align-items: center; height: 43px; padding-bottom: 4px; }
.qat { display: flex; align-items: center; padding-left: 25px; gap: 15px; }
.qat .redo { margin-left: -8px; }
.qat button:nth-child(3) { margin-left: -4px; }
.qat button:last-child { margin-left: 8px; }
.title { margin: 0; font-size: 14px; font-weight: 400; }
.winctl { display: flex; align-items: center; justify-content: flex-end; padding-right: 1px; }
.avatar { margin: 0 12px 0 14px; }
.winctl button { width: 57px; height: 38px; }
.tabs { position: relative; display: flex; height: 38px; align-items: stretch; }
.tabs a { display: flex; align-items: center; padding: 0 13px; }
.tabs .file { width: 76px; padding-left: 24px; }
.tabs .on { width: 66px; justify-content: center; padding: 0; background: #f3f3f3; color: #2b579a; }
.tabs a:nth-child(n+7) { padding: 0 13px 0 14px; }
.tabs .tell.tell { gap: 16px; padding-left: 26px; }
.share { margin-left: auto; margin-right: 27px; gap: 3px; }

/* Ribbon */
.ribbon { display: flex; height: 115px; background: #f3f3f3; border-bottom: 1px solid #d0d0d0; padding-top: 5px; font-family: "Open Sans", sans-serif; }
.group { position: relative; display: flex; flex-direction: column; flex: none; height: 104px; border-right: 1px solid #b5b5b5; }
.glabel { display: flex; align-items: center; margin-top: auto; margin-bottom: -3px; height: 14px; font-size: 12px; line-height: 14px; }
.glabel span { flex: 1; text-align: center; padding-right: 8px; }
.glabel button { margin-right: 4px; }
.clip { width: 205px; }
.clipbody { display: flex; padding-top: 2px; }
.paste { flex-direction: column; justify-content: flex-start; width: 72px; padding-top: 2px; line-height: 22px; }
.paste svg:last-child { margin-top: 5px; }
.stack { display: flex; flex-direction: column; align-items: flex-start; }
.clip .stack { margin-left: -6px; }
.stack button { height: 29px; gap: 7px; margin-top: -4px; margin-bottom: 4px; }
.clip .stack button { gap: 5px; }
.clip .stack svg { width: 18px; }
.off { color: #a5a5a5; }
.row { display: grid; align-items: center; justify-items: center; height: 39px; }
.row button { height: 28px; max-width: 100%; }
.sep { width: 1px; height: 27px; background: #ccc; }
.font { width: 430px; padding-top: 2px; }
.f1 { grid-template-columns: 142px 56px 36px 24px 10px 26px 14px 18px 24px 32px 28px; padding-left: 10px; }
.f2 { grid-template-columns: 30px 32px 28px 20px 32px 28px 32px 4px 32px 12px 40px 10px 40px 8px 40px 24px; padding-left: 7px; }
.combo {
  width: 100%;
  height: 28px;
  border: 1px solid #8a8a8a;
  background-color: #fff;
  background-image: linear-gradient(to bottom left, #666 50%, transparent 50%), linear-gradient(to bottom right, #666 50%, transparent 50%);
  background-repeat: no-repeat;
  background-size: 4px 4px;
  background-position: right 8px center, right 4px center;
  appearance: none;
  font: inherit;
  color: #222;
  padding: 0 2px;
  border-radius: 0;
}
.combo + .combo { width: 54px; }
.ltr { font-size: 16px; color: #555; }
.ltr sup { font-size: 10px; line-height: 8px; color: #3f7ab5; align-self: flex-start; }
.ltr sub { font-size: 10px; line-height: 8px; color: #3f7ab5; align-self: flex-end; padding-bottom: 4px; }
.f1 .ltr:nth-child(6) { font-size: 14px; }
.bold { font-weight: 700; }
.ital { font-family: "Liberation Serif", serif; font-style: italic; font-weight: 700; font-size: 18px; }
.und { font-weight: 700; text-decoration: underline; text-underline-offset: 3px; }
.strike { font-size: 12px; text-decoration: line-through; color: #555; }
.pho { flex-direction: column; font-size: 10px; line-height: 10px; }
.pho b { color: #3f7ab5; font-size: 13px; line-height: 14px; font-style: italic; align-self: flex-end; }
.row .boxed { width: 20px; height: 20px; border: 1px solid #3f7ab5; font-size: 16px; font-weight: 600; color: #555; }
.glow { font-size: 18px; font-weight: 600; color: #fff; -webkit-text-stroke: 1px #3f7ab5; text-shadow: 0 0 3px #8fb8e6; }
.hltext { font: 600 10px "Open Sans", sans-serif; fill: #555; }
.row .fcolor { width: 20px; height: 22px; border-bottom: 5px solid #f00; font-size: 16px; line-height: 16px; font-weight: 600; color: #555; }
.row .shade { width: 17px; height: 18px; background: #b9b9b9; font-size: 16px; line-height: 18px; font-weight: 600; color: #444; }
.row .circ { width: 18px; height: 18px; border: 1px solid #777; border-radius: 50%; font: 12px "Noto Sans CJK JP", sans-serif; }
.para { width: 360px; padding-top: 2px; }
.p1 { grid-template-columns: 30px 16px 36px 10px 38px 8px 20px 20px 36px 6px 30px 12px 16px 28px 4px 32px; padding-left: 9px; }
.p2 { grid-template-columns: repeat(5, 30px) 6px 30px 12px 20px 20px 24px 28px 18px; padding-left: 9px; }
.row .pressed { width: 28px; height: 29px; background: #c8c8c8; border: 1px solid #888; }
.styles { width: 767px; padding: 2px 0 0 11px; }
.styles .glabel { margin-left: -11px; }
.gallery { display: flex; width: 742px; height: 75px; padding-left: 1px; border: 1px solid #ccc; background: #fff; }
.st { flex: 0 0 90px; flex-direction: column; color: #666; justify-content: flex-start; white-space: nowrap; }
.pv { display: block; width: 76px; height: 38px; line-height: 34px; margin-top: 9px; overflow: hidden; color: #000; font-family: Lato, sans-serif; font-size: 15px; text-align: left; }
.h1 { font-size: 24px; font-weight: 300; color: #2f5597; }
.h2 { font-size: 19px; font-weight: 300; color: #2f5597; }
.tt { font-size: 42px; font-weight: 300; line-height: 24px; }
.sub { color: #5a5a5a; letter-spacing: 1px; }
.sem { font-style: italic; color: #404040; }
.em { font-style: italic; }
.gnav { display: grid; flex: 1; grid-template-rows: repeat(3, 1fr); border-left: 1px solid #ccc; }
.gnav button + button { border-top: 1px solid #ccc; }
.dis { background: #e6e6e6; }
.edit { width: 111px; padding-top: 2px; }
.edit .stack { padding-left: 14px; }
.edit .stack button { gap: 5px; }
.edit .fc { margin-left: 8px; }
.edit .glabel span { padding-right: 2px; }
.abac { display: flex; flex-direction: column; width: 20px; font-size: 11px; line-height: 12px; }
.abac span { display: flex; align-items: center; }
.abac b { color: #8a4fb0; font-weight: 400; }
.abac em { color: #3f7ab5; font-style: normal; }
.collapse { margin: auto 11px 4px auto; }

/* Licence notice */
.notice { display: flex; align-items: center; height: 36px; padding: 0 15px 0 14px; background: #fcf5b5; border: solid #d9d588; border-width: 1px 0; white-space: nowrap; color: #444; }
.notice strong { font-weight: 600; margin: 0 14px; }
.notice a { text-decoration: underline; text-underline-offset: 2px; margin-right: 30px; }
.nb { height: 26px; width: 118px; border: 1px solid #ababab; background: #fdfdfd; margin-right: 11px; }
.nb.wide { width: 166px; }
.nx { margin-left: auto; }

/* Document area */
.work { display: grid; grid-template-columns: 29px minmax(0, 1fr) 20px; background: #e6e6e6; overflow: hidden; border-bottom: 1px solid #c6c6c6; }
.corner { height: 27px; border: 4px solid #d4d4d4; border-left-width: 3px; background: #fdfdfd; padding: 8px 0 0 7px; margin-bottom: 2px; }
.vruler { margin-left: 5px; }
.rnum { font-size: 12px; fill: #444; text-anchor: middle; }
.canvas { display: flex; flex-direction: column; align-items: center; overflow: hidden; padding-right: 1px; }
.hruler { margin: 1px 0 3px; overflow: visible; }
.pages { width: 1020px; }
.page { background: #fff; border: 1px solid #c6c6c6; font: 17px/24px Lato, "Noto Sans", sans-serif; font-variant-ligatures: none; color: #000; white-space: nowrap; }
.first { height: 501px; border-top: 0; margin-bottom: 18px; padding-top: 1px; }
.second { height: 1320px; }
.item { display: flex; padding-left: 149px; }
.item span { width: 30px; }
.item p { margin: 0; }
.item i { font-family: "Liberation Serif", serif; font-size: 20px; line-height: 20px; }
.item sup { font-size: 14px; line-height: 12px; }
.item u { text-decoration: underline wavy #3f7ae0 1px; text-underline-offset: -1px; text-decoration-skip-ink: none; }
.q4 { margin-bottom: 52px; }
.caret { width: 1px; height: 23px; background: #000; margin: 25px 0 16px 179px; }
.marks { display: flex; justify-content: space-between; padding: 0 89px; }
.marks i { width: 30px; height: 30px; border: 1px solid #aaa; border-left: 0; border-bottom: 0; }
.marks i + i { border-left: 1px solid #aaa; border-right: 0; }
.marks.upper i { border-top: 0; border-bottom: 1px solid #aaa; }
.upper { padding-top: 89px; }
.q6 { margin-bottom: 24px; }
.scroll { display: flex; flex-direction: column; padding: 32px 1px 1px 0; }
.scroll button { height: 19px; border: 1px solid #777; background: #fff; flex: none; }
.track { flex: 1; background: #dadada; padding-top: 144px; }
.thumb { height: 124px; background: #fff; border: 1px solid #999; }

/* Status bar */
.status { display: flex; align-items: center; height: 26px; background: #f3f3f3; font-size: 12px; padding: 1px 10px 0; color: #444; white-space: nowrap; }
.s2 { margin-left: 27px; }
.s3 { margin: 0 22px 0 27px; }
.s5 { margin: 0 3px 0 26px; }
.views { display: flex; margin-left: auto; height: 26px; }
.views button { width: 50px; }
.views .sel { background: #c6c6c6; }
.zb { margin: 0 6px; }
.status input { width: 126px; height: 14px; margin: 0; appearance: none; background: linear-gradient(#333, #333) no-repeat center / 100% 1px; }
.status input::-webkit-slider-thumb { appearance: none; width: 6px; height: 14px; background: #666; }
.pct { width: 42px; text-align: right; }

/* Taskbar */
.taskbar {
  display: grid;
  grid-template-columns: 1fr auto 1fr;
  align-items: center;
  height: 60px;
  color: #222;
  background: linear-gradient(90deg, #d9dbe8, #d0e3e9 12%, #dadfeb 24%, #d1e5ea 33%, #dce2e0 37%, #d5e3ea 42%, #d0e7ea 52%, #d9e2dc 63%, #ebdcc1 73%, #e8dcc5 78%, #dbdfd8 84%, #cfdfe3);
}
.weather { display: flex; align-items: center; padding-left: 25px; gap: 8px; }
.weather div, .clock { display: flex; flex-direction: column; }
.dim { color: #666; }
.apps { display: flex; }
.apps button { position: relative; width: 48px; height: 48px; margin: 0 3px 0 4px; border-radius: 5px; }
.apps .chrome { padding: 0 0 6px 4px; }
.apps .active { background: #f2f0e9; }
.run::after, .active::after { content: ""; position: absolute; bottom: 0; left: 20px; width: 8px; height: 4px; border-radius: 2px; background: #7b7b7b; }
.active::after { left: 14px; width: 20px; background: #0078d4; }
.tray { display: flex; align-items: center; justify-content: flex-end; padding-right: 25px; }
.eng { margin: 0 23px 0 19px; }
.tray svg + svg { margin-left: 12px; }
.tray .spk + .bat, .tray .mon + .spk { margin-left: 10px; }
.clock { width: 84px; text-align: right; }
.badge { width: 20px; height: 20px; border-radius: 50%; background: #0078d4; color: #fff; font-size: 12px; text-align: center; margin-left: 9px; }
```
